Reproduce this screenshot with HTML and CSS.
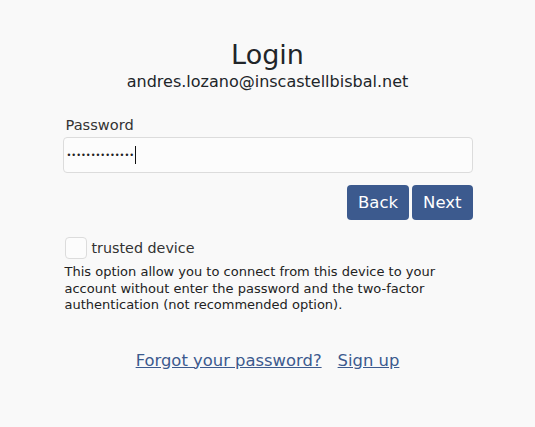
FILE: index.html
```html
<!DOCTYPE html>
<html>
<head>
<meta charset="utf-8">
<link rel="stylesheet" href="styles.css">
</head>
<body>
<main class="login">
  <h1 class="title">Login</h1>
  <div class="email">andres.lozano@inscastellbisbal.net</div>
  <form class="form">
    <label class="label" for="pw">Password</label>
    <div class="input"><span class="dots">••••••••••••••</span><span class="caret"></span></div>
    <div class="actions">
      <button type="button" class="btn">Back</button>
      <button type="button" class="btn">Next</button>
    </div>
    <div class="check-row">
      <span class="checkbox"></span>
      <span class="check-label">trusted device</span>
    </div>
    <p class="note">This option allow you to connect from this device to your account without enter the password and the two-factor authentication (not recommended option).</p>
  </form>
  <nav class="links">
    <a href="#">Forgot your password?</a>
    <a href="#">Sign up</a>
  </nav>
</main>
</body>
</html>
```
FILE: styles.css
```css
html, body {
  margin: 0;
  padding: 0;
  background: #f9f9f9;
}
body {
  font-family: "DejaVu Sans", sans-serif;
  color: #212529;
}
.login {
  width: 410px;
  margin: 0 auto;
  padding-top: 39px;
  display: flex;
  flex-direction: column;
}
.title {
  margin: 0;
  text-align: center;
  font-size: 27px;
  font-weight: 400;
  line-height: 32px;
}
.email {
  text-align: center;
  font-size: 16px;
  line-height: 22px;
  margin-top: 0;
}
.form {
  margin-top: 22px;
  display: flex;
  flex-direction: column;
}
.label {
  font-size: 14.6px;
  line-height: 20px;
  padding-left: 3px;
  color: #333;
}
.input {
  margin-top: 2px;
  height: 34px;
  border: 1px solid #dcdcdc;
  border-radius: 4px;
  background: #fcfcfc;
  display: flex;
  align-items: center;
  padding-left: 3px;
}
.dots {
  font-size: 8.2px;
  letter-spacing: 0;
  color: #222;
}
.caret {
  width: 1px;
  height: 18px;
  background: #111;
  margin-left: 1px;
}
.actions {
  margin-top: 12px;
  display: flex;
  justify-content: flex-end;
  gap: 3px;
}
.btn {
  font-family: inherit;
  font-size: 16.5px;
  color: #fff;
  background: #3c5a8e;
  border: none;
  border-radius: 4px;
  height: 35px;
  padding: 0 11px;
}
.check-row {
  margin-top: 17px;
  display: flex;
  align-items: center;
  gap: 5px;
  padding-left: 2px;
}
.checkbox {
  width: 20px;
  height: 20px;
  border: 1px solid #dcdcdc;
  border-radius: 4px;
  background: #fcfcfc;
}
.check-label {
  font-size: 14.3px;
  color: #333;
}
.note {
  margin: 5px 0 0 2px;
  font-size: 13px;
  line-height: 16.5px;
  color: #222;
}
.links {
  margin-top: 37px;
  display: flex;
  justify-content: center;
  gap: 16px;
}
.links a {
  color: #3c5a8e;
  font-size: 16.4px;
}
```
